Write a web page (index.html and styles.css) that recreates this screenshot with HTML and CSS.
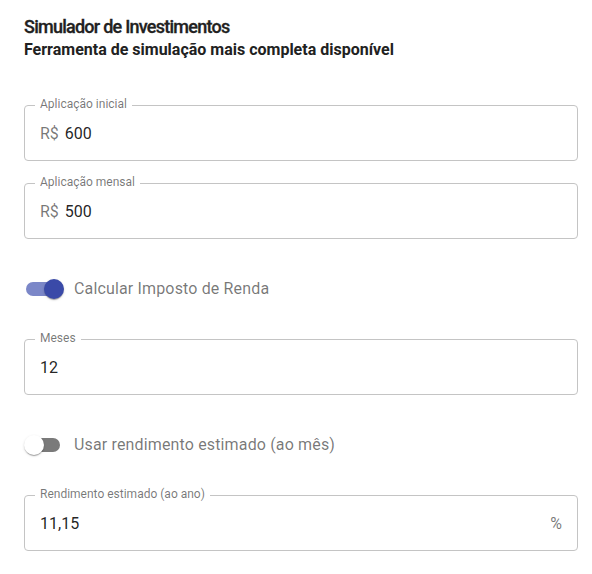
FILE: index.html
```html
<!DOCTYPE html>
<html lang="pt-BR">
<head>
<meta charset="utf-8">
<title>Simulador de Investimentos</title>
<link rel="stylesheet" href="styles.css">
</head>
<body>
<main class="page">
  <h1 class="title">Simulador de Investimentos</h1>
  <h2 class="subtitle">Ferramenta de simulação mais completa disponível</h2>

  <form class="form">
    <div class="field">
      <span class="field-label">Aplicação inicial</span>
      <div class="field-input"><span class="adorn-start">R$</span><span class="value">600</span></div>
    </div>

    <div class="field">
      <span class="field-label">Aplicação mensal</span>
      <div class="field-input"><span class="adorn-start">R$</span><span class="value">500</span></div>
    </div>

    <label class="switch-row">
      <span class="switch switch-on"><span class="track"></span><span class="thumb"></span></span>
      <span class="switch-label">Calcular Imposto de Renda</span>
    </label>

    <div class="field">
      <span class="field-label">Meses</span>
      <div class="field-input"><span class="value">12</span></div>
    </div>

    <label class="switch-row">
      <span class="switch switch-off"><span class="track"></span><span class="thumb"></span></span>
      <span class="switch-label">Usar rendimento estimado (ao mês)</span>
    </label>

    <div class="field">
      <span class="field-label">Rendimento estimado (ao ano)</span>
      <div class="field-input field-input-end"><span class="value">11,15</span><span class="adorn-end">%</span></div>
    </div>
  </form>
</main>
</body>
</html>
```

FILE: styles.css
```css
* { box-sizing: border-box; }

html, body {
  margin: 0;
  padding: 0;
  background: #ffffff;
}

body {
  font-family: Roboto, "Noto Sans", Arial, sans-serif;
  color: rgba(0, 0, 0, 0.87);
}

.page {
  width: 554px;
  margin-left: 24px;
  padding-top: 15px;
}

.title {
  margin: 0;
  font-size: 18px;
  line-height: 24px;
  font-weight: 500;
  letter-spacing: -0.75px;
  -webkit-text-stroke: 0.3px #212121;
  color: #212121;
}

.subtitle {
  margin: 1px 0 0 0;
  font-size: 16px;
  line-height: 20px;
  font-weight: 700;
  color: #212121;
}

.form {
  display: flex;
  flex-direction: column;
  gap: 22px;
  margin-top: 45px;
}

.field {
  position: relative;
  height: 56px;
  border: 1px solid #c4c4c4;
  border-radius: 4px;
}

.field-label {
  position: absolute;
  top: -10px;
  left: 10px;
  padding: 0 5px;
  background: #ffffff;
  font-size: 12px;
  line-height: 16px;
  color: rgba(0, 0, 0, 0.54);
  white-space: nowrap;
}

.field-input {
  display: flex;
  align-items: center;
  padding: 16px 15px 15px 15px;
  font-size: 16px;
  line-height: 23px;
}

.field-input-end {
  justify-content: space-between;
}

.adorn-start {
  color: rgba(0, 0, 0, 0.54);
  margin-right: 6px;
}

.adorn-end {
  color: rgba(0, 0, 0, 0.54);
}

.value {
  color: rgba(0, 0, 0, 0.87);
}

.switch-row {
  display: flex;
  align-items: center;
  height: 38px;
  margin: 9px 0 9px -10px;
}

.switch {
  position: relative;
  width: 58px;
  height: 38px;
  padding: 12px;
  flex: none;
}

.track {
  display: block;
  width: 34px;
  height: 14px;
  border-radius: 7px;
}

.thumb {
  position: absolute;
  top: 9px;
  width: 20px;
  height: 20px;
  border-radius: 50%;
  box-shadow: 0 2px 1px -1px rgba(0,0,0,0.2), 0 1px 1px 0 rgba(0,0,0,0.14), 0 1px 3px 0 rgba(0,0,0,0.12);
}

.switch-on .track { background: #7b87c8; }
.switch-on .thumb { left: 30px; background: #3a4aa8; }

.switch-off .track { background: #7a7a7a; }
.switch-off .thumb { left: 10px; background: #ffffff; }

.switch-label {
  margin-left: 2px;
  font-size: 16px;
  line-height: 24px;
  letter-spacing: 0.15px;
  color: rgba(0, 0, 0, 0.54);
}
```
